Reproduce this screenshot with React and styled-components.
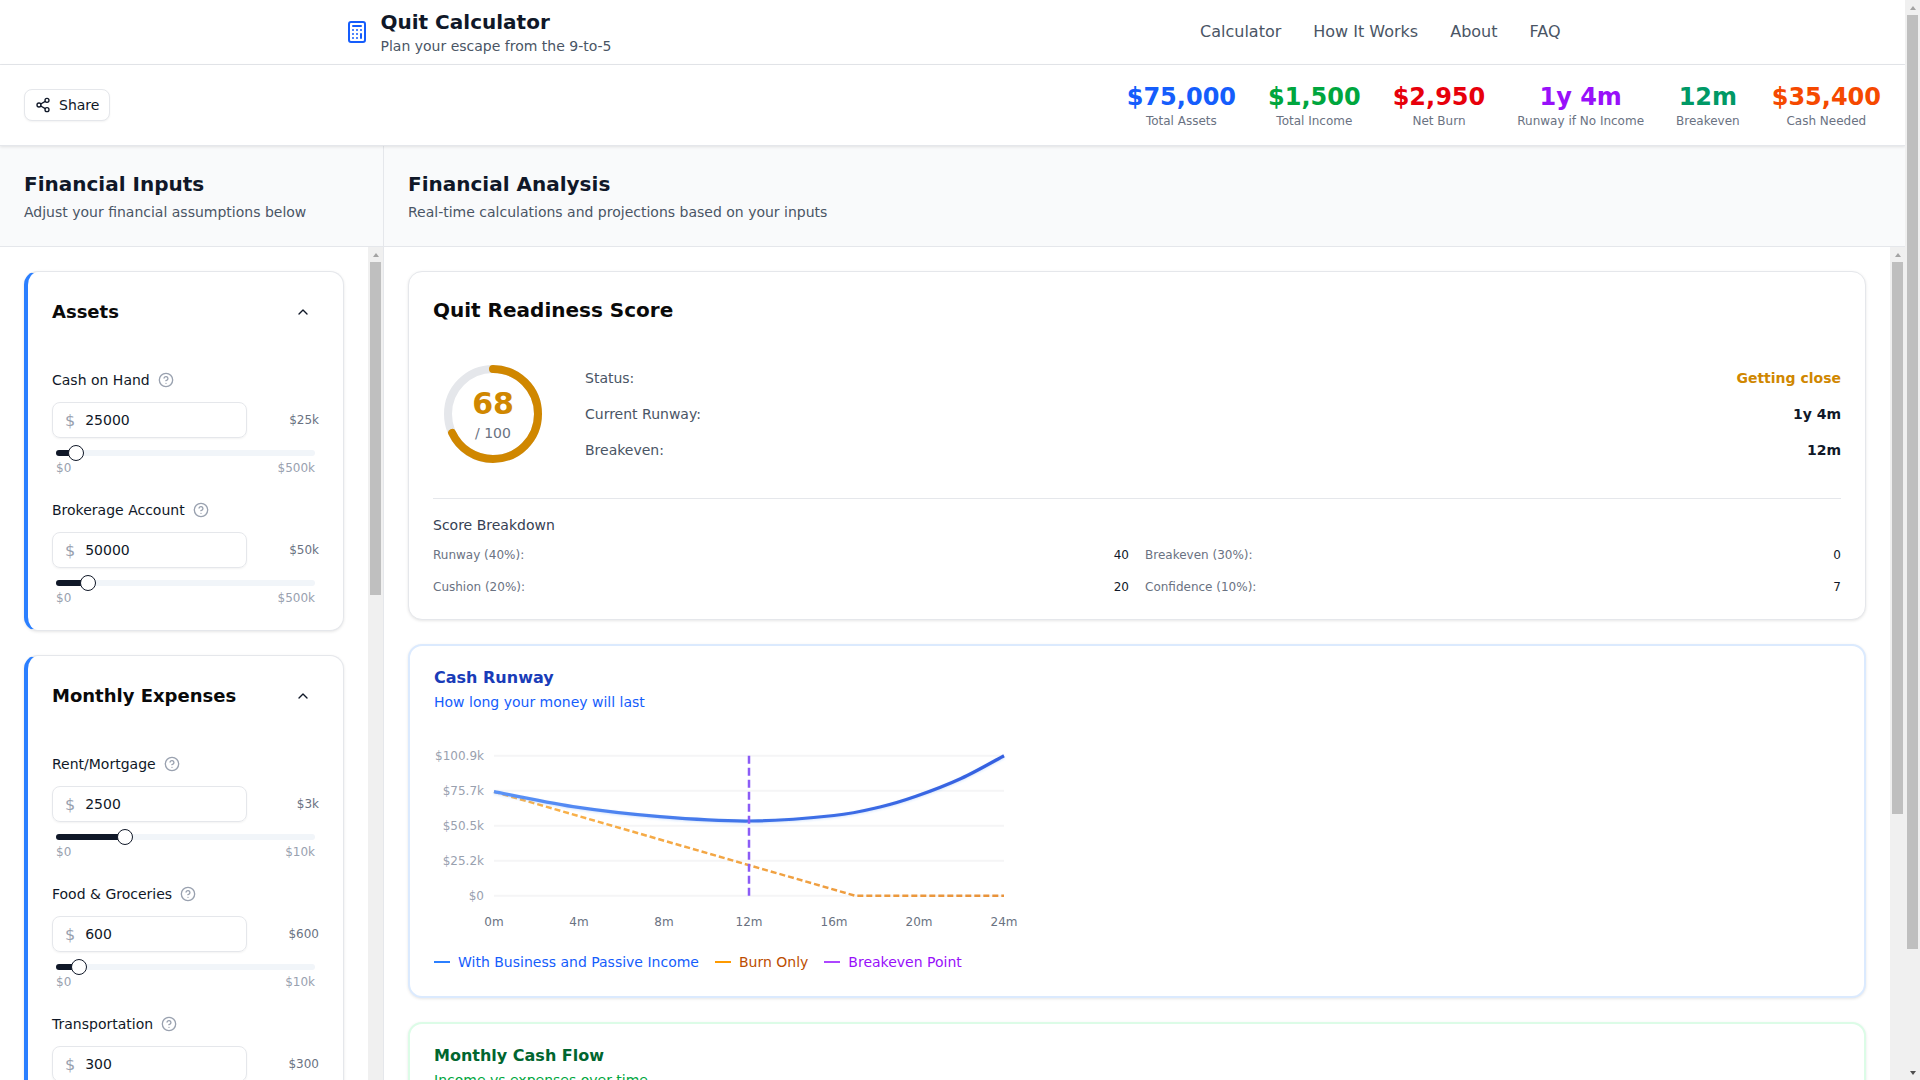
import styled, { createGlobalStyle } from 'styled-components'
import { Calculator, ChevronUp, CircleHelp, Share2 } from 'lucide-react'

const GlobalStyle = createGlobalStyle`
  * {
    box-sizing: border-box;
  }
  html, body {
    margin: 0;
    padding: 0;
    background: #fff;
    font-family: "DejaVu Sans", sans-serif;
    color: #101828;
  }
  body {
    padding-right: 15px;
  }
`

const Rail = styled.div`
  width: 15px;
  display: flex;
  flex-direction: column;
  background: #f0f0f0;
  ${(p) =>
    p.$page
      ? 'position: fixed; top: 0; right: 0; bottom: 0; z-index: 5;'
      : 'position: absolute; top: 0; right: 0; bottom: 0;'}
`

const RailArrow = styled.div`
  flex: none;
  height: 15px;
  display: flex;
  align-items: center;
  justify-content: center;
  &::before {
    content: '';
    border-left: 3.5px solid transparent;
    border-right: 3.5px solid transparent;
    ${(p) =>
      p.$down
        ? 'border-top: 4px solid #505050;'
        : 'border-bottom: 4px solid #a3a3a3;'}
  }
`

const RailTrack = styled.div`
  flex: 1;
  padding: 0 2px;
`

const RailThumb = styled.div`
  height: ${(p) => p.$height}px;
  background: #bfbfbf;
`

const Header = styled.header`
  height: 65px;
  border-bottom: 1px solid #e5e7eb;
  background: #fff;
`

const HeaderInner = styled.div`
  max-width: 1280px;
  height: 64px;
  margin: 0 auto;
  padding: 0 32px;
  display: flex;
  align-items: center;
  justify-content: space-between;
`

const Brand = styled.div`
  display: flex;
  align-items: center;
  gap: 12px;
  svg {
    color: #155dfc;
  }
`

const BrandTitle = styled.h1`
  margin: 0;
  font-size: 20px;
  line-height: 28px;
  font-weight: 700;
`

const BrandSub = styled.p`
  margin: 0;
  font-size: 14px;
  line-height: 20px;
  color: #4a5565;
`

const Nav = styled.nav`
  display: flex;
  gap: 32px;
  a {
    font-size: 16px;
    line-height: 24px;
    color: #4a5565;
    text-decoration: none;
  }
`

const StatsBar = styled.section`
  position: relative;
  z-index: 1;
  height: 81px;
  padding: 16px 24px;
  display: flex;
  align-items: center;
  justify-content: space-between;
  background: #fff;
  border-bottom: 1px solid #e5e7eb;
  box-shadow: 0 1px 3px rgba(0, 0, 0, 0.1);
`

const ShareButton = styled.button`
  display: flex;
  align-items: center;
  gap: 8px;
  height: 32px;
  padding: 0 10px;
  background: #fff;
  border: 1px solid #e5e7eb;
  border-radius: 8px;
  box-shadow: 0 1px 2px rgba(0, 0, 0, 0.05);
  font: inherit;
  font-size: 14px;
  color: #101828;
`

const Stats = styled.div`
  display: flex;
  gap: 32px;
`

const Stat = styled.div`
  text-align: center;
`

const StatValue = styled.div`
  font-size: 24px;
  line-height: 32px;
  font-weight: 700;
  color: ${(p) => p.$color};
`

const StatLabel = styled.div`
  font-size: 12px;
  line-height: 16px;
  color: #6a7282;
`

const Main = styled.main`
  display: grid;
  grid-template-columns: 384px 1fr;
`

const Column = styled.div`
  display: flex;
  flex-direction: column;
  min-width: 0;
  border-right: ${(p) => (p.$side ? '1px solid #e5e7eb' : 'none')};
`

const PanelHead = styled.div`
  height: 101px;
  padding: 24px;
  background: #f9fafb;
  border-bottom: 1px solid #e5e7eb;
`

const PanelTitle = styled.h2`
  margin: 0 0 4px;
  font-size: 20px;
  line-height: 28px;
  font-weight: 700;
`

const PanelSub = styled.p`
  margin: 0;
  font-size: 14px;
  line-height: 20px;
  color: #4a5565;
`

const ScrollPane = styled.div`
  position: relative;
  height: 967px;
  padding-right: 15px;
`

const ScrollArea = styled.div`
  height: 100%;
  overflow-y: auto;
  padding: 24px;
  display: flex;
  flex-direction: column;
  gap: 24px;
`

const InputCard = styled.section`
  flex: none;
  background: #fff;
  border: 1px solid #e5e7eb;
  border-left: 4px solid #2b7fff;
  border-radius: 14px;
  box-shadow: 0 1px 3px rgba(0, 0, 0, 0.1);
  padding: 0 24px;
`

const CardHeader = styled.div`
  height: 98px;
  padding: 26px 8px 0 0;
  display: flex;
  align-items: flex-start;
  justify-content: space-between;
  h3 {
    margin: 0;
    font-size: 18px;
    line-height: 28px;
    font-weight: 700;
    color: #0a0a0a;
  }
  svg {
    margin-top: 6px;
  }
`

const Field = styled.div`
  padding-bottom: 24px;
`

const LabelRow = styled.div`
  display: flex;
  align-items: center;
  gap: 8px;
  height: 20px;
  margin-bottom: 12px;
  font-size: 14px;
  color: #101828;
  svg {
    color: #99a1af;
  }
`

const InputRow = styled.div`
  display: flex;
  align-items: center;
  justify-content: space-between;
`

const InputBox = styled.div`
  width: 195px;
  height: 36px;
  display: flex;
  align-items: center;
  gap: 10px;
  padding: 0 12px;
  border: 1px solid #e5e7eb;
  border-radius: 8px;
  box-shadow: 0 1px 2px rgba(0, 0, 0, 0.05);
  font-size: 14px;
  span {
    font-size: 16px;
    color: #99a1af;
  }
  input {
    flex: 1;
    min-width: 0;
    border: 0;
    outline: 0;
    padding: 0;
    font: inherit;
    color: #101828;
    background: transparent;
  }
`

const ShortValue = styled.span`
  font-size: 12px;
  color: #6a7282;
`

const SliderWrap = styled.div`
  position: relative;
  height: 14px;
  margin: 8px 4px 0;
`

const Track = styled.div`
  position: absolute;
  left: 0;
  right: 0;
  top: 4px;
  height: 6px;
  border-radius: 3px;
  background: #f1f5f9;
  overflow: hidden;
`

const Fill = styled.div`
  height: 100%;
  background: #101828;
`

const Thumb = styled.div`
  position: absolute;
  top: -1px;
  width: 16px;
  height: 16px;
  margin-left: -8px;
  border-radius: 50%;
  background: #fff;
  border: 1px solid #101828;
`

const RangeLabels = styled.div`
  display: flex;
  justify-content: space-between;
  margin: 0 4px;
  font-size: 12px;
  line-height: 16px;
  color: #99a1af;
`

const Card = styled.section`
  flex: none;
  background: #fff;
  border: 1px solid #e5e7eb;
  border-radius: 14px;
  box-shadow: 0 1px 3px rgba(0, 0, 0, 0.1);
  padding: 24px;
  h3 {
    margin: 0 0 30px;
    font-size: 20px;
    line-height: 28px;
    font-weight: 700;
    color: #0a0a0a;
  }
`

const ScoreRow = styled.div`
  display: flex;
  align-items: center;
  gap: 32px;
  padding-bottom: 24px;
  border-bottom: 1px solid #e5e7eb;
`

const Ring = styled.div`
  position: relative;
  flex: none;
  width: 120px;
  height: 120px;
  svg {
    display: block;
    transform: rotate(-90deg);
  }
`

const RingText = styled.div`
  position: absolute;
  inset: 0;
  display: flex;
  flex-direction: column;
  align-items: center;
  justify-content: center;
  strong {
    font-size: 30px;
    line-height: 36px;
    color: #d08700;
  }
  span {
    margin-top: 1px;
    font-size: 14px;
    line-height: 20px;
    color: #6a7282;
  }
`

const StatusList = styled.div`
  flex: 1;
  display: flex;
  flex-direction: column;
  gap: 16px;
`

const StatusRow = styled.div`
  display: flex;
  justify-content: space-between;
  font-size: 14px;
  line-height: 20px;
  color: #4a5565;
  strong {
    font-weight: 700;
    color: ${(p) => p.$color || '#101828'};
  }
`

const BreakdownTitle = styled.div`
  margin: 16px 0 12px;
  font-size: 14px;
  line-height: 20px;
  color: #364153;
`

const BreakdownGrid = styled.div`
  display: grid;
  grid-template-columns: 1fr 1fr;
  gap: 16px;
  font-size: 12px;
  line-height: 16px;
  color: #6a7282;
  div {
    display: flex;
    justify-content: space-between;
  }
  b {
    font-weight: 500;
    color: #101828;
  }
`

const tones = {
  blue: { border: '#dbeafe', title: '#193cb8', sub: '#155dfc' },
  green: { border: '#dcfce7', title: '#016630', sub: '#00a63e' },
  purple: { border: '#f3e8ff', title: '#6e11b0', sub: '#9810fa' },
}

const ChartCardBox = styled.section`
  flex: none;
  min-height: ${(p) => p.$minHeight || '354px'};
  padding: 20px 24px 24px;
  background: #fff;
  border: 2px solid ${(p) => tones[p.$tone].border};
  border-radius: 14px;
  box-shadow: 0 1px 3px rgba(0, 0, 0, 0.1);
`

const ChartTitle = styled.h4`
  margin: 0;
  font-size: 16px;
  line-height: 24px;
  font-weight: 700;
  color: ${(p) => tones[p.$tone].title};
`

const ChartSub = styled.p`
  margin: 0 0 22px;
  font-size: 14px;
  line-height: 24px;
  color: ${(p) => tones[p.$tone].sub};
`

const ChartSvg = styled.svg`
  display: block;
  width: 600px;
  height: 200px;
  font-family: "DejaVu Sans", sans-serif;
`

const Legend = styled.div`
  display: flex;
  gap: 16px;
  margin-top: 16px;
  font-size: 14px;
  line-height: 20px;
`

const LegendItem = styled.span`
  display: flex;
  align-items: center;
  gap: 8px;
  color: ${(p) => p.$text};
  i {
    width: 16px;
    height: 2px;
    background: ${(p) => p.$line};
  }
`

const stats = [
  { value: '$75,000', label: 'Total Assets', color: '#155dfc' },
  { value: '$1,500', label: 'Total Income', color: '#00a63e' },
  { value: '$2,950', label: 'Net Burn', color: '#e7000b' },
  { value: '1y 4m', label: 'Runway if No Income', color: '#9810fa' },
  { value: '12m', label: 'Breakeven', color: '#009966' },
  { value: '$35,400', label: 'Cash Needed', color: '#f54900' },
]

const inputGroups = [
  {
    title: 'Assets',
    fields: [
      { label: 'Cash on Hand', value: 25000, short: '$25k', max: 500000, maxLabel: '$500k' },
      { label: 'Brokerage Account', value: 50000, short: '$50k', max: 500000, maxLabel: '$500k' },
    ],
  },
  {
    title: 'Monthly Expenses',
    fields: [
      { label: 'Rent/Mortgage', value: 2500, short: '$3k', max: 10000, maxLabel: '$10k' },
      { label: 'Food & Groceries', value: 600, short: '$600', max: 10000, maxLabel: '$10k' },
      { label: 'Transportation', value: 300, short: '$300', max: 10000, maxLabel: '$10k' },
      { label: 'Insurance', value: 250, short: '$250', max: 10000, maxLabel: '$10k' },
      { label: 'Utilities', value: 150, short: '$150', max: 10000, maxLabel: '$10k' },
      { label: 'Debt Payments', value: 400, short: '$400', max: 10000, maxLabel: '$10k' },
      { label: 'Other', value: 250, short: '$250', max: 10000, maxLabel: '$10k' },
    ],
  },
  {
    title: 'Income',
    fields: [
      { label: 'Business Revenue', value: 1000, short: '$1k', max: 20000, maxLabel: '$20k' },
      { label: 'Passive Income', value: 500, short: '$500', max: 10000, maxLabel: '$10k' },
      { label: 'Part-Time Work', value: 0, short: '$0', max: 10000, maxLabel: '$10k' },
      { label: 'Monthly Growth', value: 10, short: '10', max: 100, maxLabel: '100' },
      { label: 'Investment Return', value: 5, short: '5', max: 20, maxLabel: '20' },
    ],
  },
  {
    title: 'Assumptions',
    fields: [
      { label: 'Safety Cushion', value: 6, short: '6', max: 24, maxLabel: '24' },
      { label: 'Inflation', value: 3, short: '3', max: 10, maxLabel: '10' },
      { label: 'Confidence', value: 70, short: '70', max: 100, maxLabel: '100' },
    ],
  },
]

const curve = [
  [60, 55.7],
  [139, 70.7],
  [226, 80.7],
  [315, 85],
  [400, 79.5],
  [446, 71],
  [482, 60.3],
  [527, 42.5],
  [570, 19.7],
]

// catmull-rom through the sampled points, so the line stays smooth
function smoothPath(points) {
  let d = `M${points[0][0]} ${points[0][1]}`
  for (let i = 0; i < points.length - 1; i++) {
    const p0 = points[i - 1] || points[i]
    const p1 = points[i]
    const p2 = points[i + 1]
    const p3 = points[i + 2] || p2
    const c1x = p1[0] + (p2[0] - p0[0]) / 6
    const c1y = p1[1] + (p2[1] - p0[1]) / 6
    const c2x = p2[0] - (p3[0] - p1[0]) / 6
    const c2y = p2[1] - (p3[1] - p1[1]) / 6
    d += `C${c1x} ${c1y} ${c2x} ${c2y} ${p2[0]} ${p2[1]}`
  }
  return d
}

// the browser here hides native scrollbars, so the bar is drawn
function Scrollbar({ thumb, page }) {
  return (
    <Rail $page={page}>
      <RailArrow />
      <RailTrack>
        <RailThumb $height={thumb} />
      </RailTrack>
      <RailArrow $down />
    </Rail>
  )
}

function Slider({ value, max }) {
  const ratio = value / max
  const left = `calc(8px + ${ratio} * (100% - 16px))`
  return (
    <SliderWrap>
      <Track>
        <Fill style={{ width: left }} />
      </Track>
      <Thumb style={{ left }} />
    </SliderWrap>
  )
}

function InputField({ label, value, short, max, maxLabel }) {
  return (
    <Field>
      <LabelRow>
        {label}
        <CircleHelp size={16} />
      </LabelRow>
      <InputRow>
        <InputBox>
          <span>$</span>
          <input defaultValue={value} />
        </InputBox>
        <ShortValue>{short}</ShortValue>
      </InputRow>
      <Slider value={value} max={max} />
      <RangeLabels>
        <span>$0</span>
        <span>{maxLabel}</span>
      </RangeLabels>
    </Field>
  )
}

function RunwayChart({ id }) {
  const yTicks = [
    ['$100.9k', 19.7],
    ['$75.7k', 54.7],
    ['$50.5k', 89.7],
    ['$25.2k', 124.7],
    ['$0', 159.7],
  ]
  const xTicks = ['0m', '4m', '8m', '12m', '16m', '20m', '24m']
  return (
    <ChartSvg viewBox="0 0 600 200">
      <defs>
        <linearGradient id={id} x1="0" y1="0" x2="1" y2="0">
          <stop offset="0" stopColor="#5b93f7" />
          <stop offset="0.5" stopColor="#4073e8" />
          <stop offset="1" stopColor="#3560e0" />
        </linearGradient>
        <linearGradient id={`${id}-burn`} x1="0" y1="0" x2="1" y2="0">
          <stop offset="0" stopColor="#fbb54c" />
          <stop offset="1" stopColor="#e8923a" />
        </linearGradient>
        <filter id={`${id}-shadow`} x="-5%" y="-20%" width="110%" height="150%">
          <feDropShadow dx="0" dy="1" stdDeviation="1" floodColor="#3b82f6" floodOpacity="0.2" />
        </filter>
      </defs>
      {yTicks.map(([label, y]) => (
        <g key={label}>
          <line x1="60" x2="570" y1={y} y2={y} stroke="#f5f5f6" strokeWidth="2" />
          <text x="50" y={y + 4} textAnchor="end" fontSize="12" fill="#99a1af">
            {label}
          </text>
        </g>
      ))}
      {xTicks.map((label, i) => (
        <text key={label} x={60 + i * 85} y="190" textAnchor="middle" fontSize="12" fill="#6a7282">
          {label}
        </text>
      ))}
      <path d="M60 55.7L421 159.7L570 159.7" fill="none" stroke={`url(#${id}-burn)`} strokeWidth="2.5" strokeDasharray="6 3" />
      <path d={smoothPath(curve)} fill="none" stroke={`url(#${id})`} strokeWidth="3.25" filter={`url(#${id}-shadow)`} />
      <line x1="315" x2="315" y1="19.7" y2="159.7" stroke="#8b5cf6" strokeWidth="2.5" strokeDasharray="8 4" />
    </ChartSvg>
  )
}

function ChartCard({ tone, title, sub, id }) {
  return (
    <ChartCardBox $tone={tone}>
      <ChartTitle $tone={tone}>{title}</ChartTitle>
      <ChartSub $tone={tone}>{sub}</ChartSub>
      <RunwayChart id={id} />
      <Legend>
        <LegendItem $line="#2b7fff" $text="#155dfc">
          <i />
          With Business and Passive Income
        </LegendItem>
        <LegendItem $line="#fe9a00" $text="#bb4d00">
          <i />
          Burn Only
        </LegendItem>
        <LegendItem $line="#ad46ff" $text="#9810fa">
          <i />
          Breakeven Point
        </LegendItem>
      </Legend>
    </ChartCardBox>
  )
}

export default function App() {
  return (
    <>
      <GlobalStyle />
      <Scrollbar page thumb={934} />
      <Header>
        <HeaderInner>
          <Brand>
            <Calculator size={24} />
            <div>
              <BrandTitle>Quit Calculator</BrandTitle>
              <BrandSub>Plan your escape from the 9-to-5</BrandSub>
            </div>
          </Brand>
          <Nav>
            <a href="#calculator">Calculator</a>
            <a href="#how">How It Works</a>
            <a href="#about">About</a>
            <a href="#faq">FAQ</a>
          </Nav>
        </HeaderInner>
      </Header>
      <StatsBar>
        <ShareButton>
          <Share2 size={16} />
          Share
        </ShareButton>
        <Stats>
          {stats.map((s) => (
            <Stat key={s.label}>
              <StatValue $color={s.color}>{s.value}</StatValue>
              <StatLabel>{s.label}</StatLabel>
            </Stat>
          ))}
        </Stats>
      </StatsBar>
      <Main>
        <Column $side>
          <PanelHead>
            <PanelTitle>Financial Inputs</PanelTitle>
            <PanelSub>Adjust your financial assumptions below</PanelSub>
          </PanelHead>
          <ScrollPane>
            <ScrollArea>
              {inputGroups.map((group) => (
                <InputCard key={group.title}>
                  <CardHeader>
                    <h3>{group.title}</h3>
                    <ChevronUp size={16} />
                  </CardHeader>
                  {group.fields.map((field) => (
                    <InputField key={field.label} {...field} />
                  ))}
                </InputCard>
              ))}
            </ScrollArea>
            <Scrollbar thumb={333} />
          </ScrollPane>
        </Column>
        <Column>
          <PanelHead>
            <PanelTitle>Financial Analysis</PanelTitle>
            <PanelSub>Real-time calculations and projections based on your inputs</PanelSub>
          </PanelHead>
          <ScrollPane>
            <ScrollArea>
              <Card>
                <h3>Quit Readiness Score</h3>
                <ScoreRow>
                  <Ring>
                    <svg width="120" height="120" viewBox="0 0 120 120">
                      <circle cx="60" cy="60" r="45" fill="none" stroke="#e5e7eb" strokeWidth="8" />
                      <circle
                        cx="60"
                        cy="60"
                        r="45"
                        fill="none"
                        stroke="#d08700"
                        strokeWidth="8"
                        strokeLinecap="round"
                        strokeDasharray={`${2 * Math.PI * 45 * 0.68} ${2 * Math.PI * 45}`}
                      />
                    </svg>
                    <RingText>
                      <strong>68</strong>
                      <span>/ 100</span>
                    </RingText>
                  </Ring>
                  <StatusList>
                    <StatusRow $color="#d08700">
                      <span>Status:</span>
                      <strong>Getting close</strong>
                    </StatusRow>
                    <StatusRow>
                      <span>Current Runway:</span>
                      <strong>1y 4m</strong>
                    </StatusRow>
                    <StatusRow>
                      <span>Breakeven:</span>
                      <strong>12m</strong>
                    </StatusRow>
                  </StatusList>
                </ScoreRow>
                <BreakdownTitle>Score Breakdown</BreakdownTitle>
                <BreakdownGrid>
                  <div>
                    <span>Runway (40%):</span>
                    <b>40</b>
                  </div>
                  <div>
                    <span>Breakeven (30%):</span>
                    <b>0</b>
                  </div>
                  <div>
                    <span>Cushion (20%):</span>
                    <b>20</b>
                  </div>
                  <div>
                    <span>Confidence (10%):</span>
                    <b>7</b>
                  </div>
                </BreakdownGrid>
              </Card>
              <ChartCard tone="blue" id="runway" title="Cash Runway" sub="How long your money will last" />
              <ChartCard tone="green" id="flow" title="Monthly Cash Flow" sub="Income vs expenses over time" />
              <ChartCardBox $tone="purple" $minHeight="465px">
                <ChartTitle $tone="purple">Runway Scenarios</ChartTitle>
                <ChartSub $tone="purple">Compare outcomes under different assumptions</ChartSub>
              </ChartCardBox>
            </ScrollArea>
            <Scrollbar thumb={552} />
          </ScrollPane>
        </Column>
      </Main>
    </>
  )
}
